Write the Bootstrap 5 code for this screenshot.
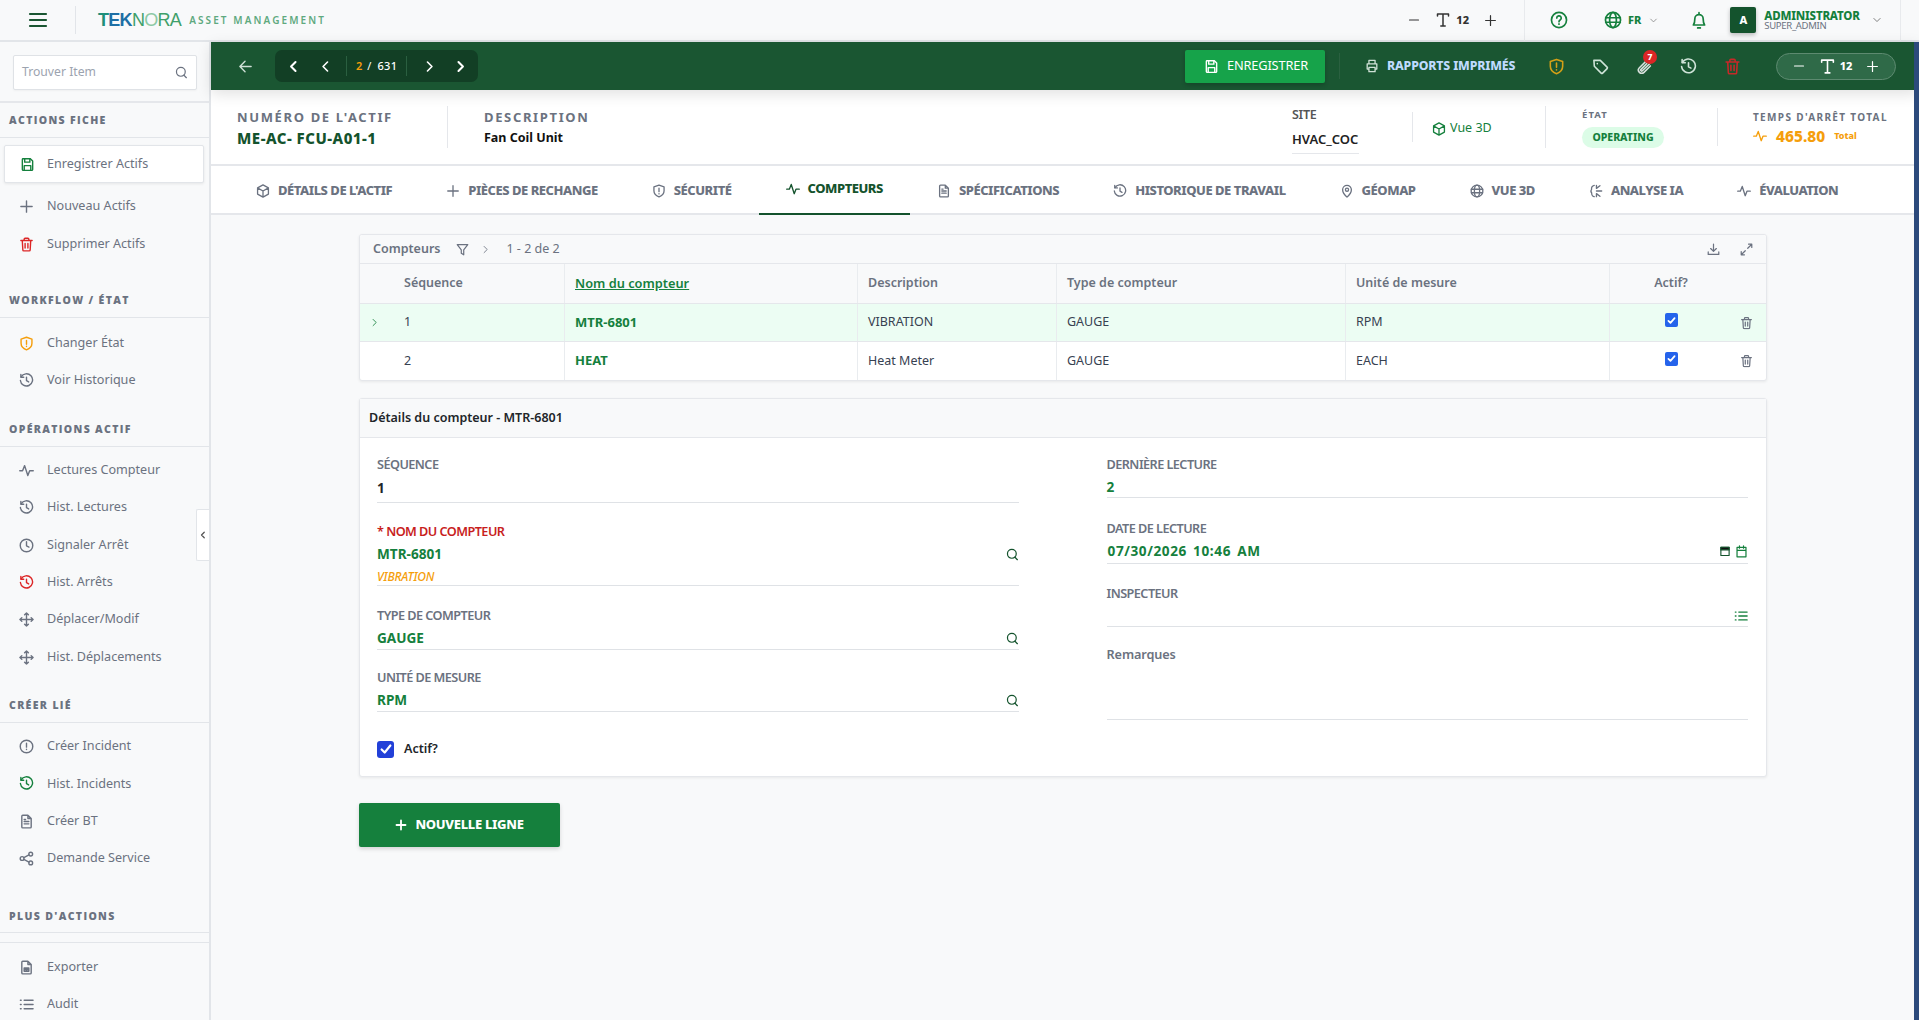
<!DOCTYPE html>
<html lang="fr">
<head>
<meta charset="utf-8">
<title>Compteurs</title>
<link href="https://cdn.jsdelivr.net/npm/bootstrap@5.3.0/dist/css/bootstrap.min.css" rel="stylesheet">
<style>
:root{--g:#15803d;--dg:#14532d;--bar:#1a5632;--txt:#6b7280;--line:#e5e7eb}
html,body{height:100%;overflow:hidden}
body{font-family:"Noto Sans","Open Sans",sans-serif;font-size:13px;background:#f8f9fa;color:#212529}
svg{fill:none;stroke:currentColor;stroke-width:1.5;stroke-linecap:round;stroke-linejoin:round;flex:none}
.sw2{stroke-width:2}.sw25{stroke-width:2.5}
.topbar{height:42px;background:#f8f9fa;border-bottom:2px solid #e2e5e9}
.burger{width:75px;color:var(--bar)}
.burger svg{stroke-width:2.2}
.tb-sep{width:1px;height:28px;background:#e2e5e9}
.logo{margin-left:22px;font-family:"Liberation Sans",sans-serif;font-size:18px;letter-spacing:-.7px;color:#3fa06a;line-height:1}
.logo b{color:#1d6fa5;font-weight:700}
.logo b i{font-style:normal;color:#1f8f7a}
.logo span{color:#8cc9a5}
.logo-sub{margin-left:8px;font-size:10px;font-weight:600;letter-spacing:2.1px;color:#5fa97f}
.font-ctl{gap:15px;color:#333;margin-right:27px}
.font-num{font-size:11px;font-weight:800;margin-left:-10px}
.tb-right{height:41px;border-left:1px solid #e8eaed;border-right:1px solid #e8eaed;padding-left:25px;width:377px;margin-right:18px;color:var(--g)}
.ic-globe{margin-left:36px}
.fr-txt{font-size:11px;font-weight:800;margin-left:6px}
.chev-a{color:#888;margin-left:8px}
.ic-bell{margin-left:32px}
.avatar{width:26px;height:26px;border-radius:2px;background:var(--dg);color:#fff;font-weight:800;font-size:11px;box-shadow:0 2px 4px rgba(0,0,0,.25);margin-left:22px}
.u-name{font-size:11.5px;font-weight:800;color:var(--g);line-height:10px;letter-spacing:-.2px}
.u-role{font-size:9.5px;color:#6b7280;line-height:9px;letter-spacing:-.3px}
.chev-b{color:#777;margin-left:12px}
.shell{height:978px}
.side{width:211px;flex:none;background:#f8f9fa;border-right:2px solid #e2e5e9;position:relative;overflow:hidden}
.side-search{height:61px;border-bottom:2px solid #e5e7eb;padding:13px 13px 0}
.search-box{height:35px;width:184px;border:1px solid #dfe2e6;border-radius:2px;background:#fff;padding:0 8px;color:#9ca3af;font-size:12.2px;box-shadow:0 1px 2px rgba(0,0,0,.04)}
.search-box svg{color:#6b7280}
.side-h{font-family:"Open Sans","Noto Sans",sans-serif;font-size:10.5px;font-weight:800;letter-spacing:1.35px;color:#6b7280;padding:2px 0 0 9px;height:35px;border-bottom:1px solid #e2e5e9;display:flex;align-items:center}
.sh-w{margin-top:20px}.sh-o{margin-top:12px}.sh-c{margin-top:12px}.sh-p{margin-top:21px}
.side-i{display:flex;align-items:center;height:37.4px;padding-left:19px;gap:13px;color:#6b7280;font-size:12.6px;white-space:nowrap}
.side-i svg{width:15px;height:15px}
.si-first{margin-top:5px}.si-w{margin-top:7px}
.side-act{margin:7px 5px 5px 4px;padding-left:15px;gap:12px;height:38px;background:#fff;border:1px solid #e2e5e9;border-radius:2px;box-shadow:0 1px 3px rgba(0,0,0,.08);padding-right:0}
.side-rule{height:10px;border-bottom:1px solid #e2e5e9}
.c-g{color:#15803d}.c-r{color:#dc2626}.c-o{color:#f59e0b}
.collapse-h{position:absolute;right:0;top:467px;width:13px;height:52px;background:#fff;border:1px solid #e2e5e9;border-right:0;border-radius:2px 0 0 2px;color:#555;z-index:2}
.collapse-h svg{stroke-width:2.5}
.main{flex:1;min-width:0;position:relative}
.gbar{height:48px;background:var(--bar);padding:0 23px 0 27px;color:#fff;position:relative;box-shadow:0 4px 14px rgba(0,0,0,.12);z-index:2}
.g-back{color:#cfe0d6}
.pager{margin-left:22px;width:203px;height:32px;background:#123f25;border-radius:7px;padding-left:12px;font-size:11px}
.pg-sep{width:1px;height:20px;background:#2a5f40}
.ml14{margin-left:14px}.ml19{margin-left:19px}.ml8{margin-left:9px}.ml5{margin-left:5px}.ml6{margin-left:6px}.ml16{margin-left:16px}.ml18{margin-left:18px}.ml9{margin-left:9px}
.pg-cur{color:#f59e0b;font-weight:600}
.pg-tot{font-weight:500;letter-spacing:.4px}
.btn-save{background:#16a34a;color:#fff;border:0;border-radius:2px;width:140px;height:33px;font-size:12.8px;font-weight:400;box-shadow:0 2px 4px rgba(0,0,0,.2);padding:0 0 0 2px;letter-spacing:-.15px}
.btn-save:hover{background:#16a34a;color:#fff}
.gb-sep{width:1px;height:26px;background:#2a6040;margin:0 25px 0 14px}
.rapports{color:#bfdbfe;font-weight:800;font-size:12.3px;letter-spacing:-.15px;width:169px}
.rapports svg{color:#cfe0d6}
.gicon{width:44px}
.gi-sh{color:#d4a017}.gi-tag{color:#cfe3d8}.gi-cl{color:#d8e0dc}.gi-tr{color:#c62828}
.fpill{width:120px;height:27px;margin-left:22px;border:1px solid #5d8a70;border-radius:14px;background:#2f6a48;font-size:11px;font-weight:800;gap:14px}
.clip-badge{position:absolute;top:-8px;right:9px;width:14px;height:14px;border-radius:50%;background:#dc2626;font-size:8.5px;font-weight:800;color:#fff;line-height:14px;text-align:center}
.infobar{height:76px;background:#fff;border-bottom:2px solid #e5e7eb;padding:0 0 0 26px;position:relative;z-index:1}
.ib-num{width:210px;padding-top:3px}
.ib-desc{margin-left:36px;padding-top:3px}
.i-lab{font-size:13px;font-weight:700;letter-spacing:1.65px;color:#6b7280;line-height:16px}
.i-val{font-size:15px;font-weight:800;color:var(--dg);line-height:20px;letter-spacing:.5px;margin-top:3px}
.i-val2{font-size:12.5px;font-weight:700;color:#111;line-height:20px;margin-top:3px}
.i-sep{width:1px;background:#e5e7eb}
.h42{height:42px}.h30{height:30px}.h38{height:38px}
.ib-right{margin-right:30px}
.ib-site{width:120px;padding-top:7px}
.site-val{font-size:13px;font-weight:600;color:#222;line-height:20px;border-bottom:1px solid #e5e7eb;padding-bottom:4px;margin-top:7px;width:67px}
.site-lab{font-size:12.5px;font-weight:600;color:#555;letter-spacing:-.3px;line-height:14px}
.ib-3d{margin-left:19px;width:113px;font-size:12.5px;color:#15803d;padding-top:3px}
.ib-etat{margin-left:36px;width:135px;padding-top:2px}
.ib-temps{margin-left:35px;width:136px;padding-top:2px}
.state-pill{width:82px;height:21px;background:#dcfce7;border-radius:11px;color:#15803d;font-size:10.5px;font-weight:800;margin-top:5px}
.sm-lab{font-size:9.5px;font-weight:700;letter-spacing:1.1px;color:#6b7280}
.sm-lab2{font-size:10px;letter-spacing:1.35px;white-space:nowrap}
.t-val{font-size:15.5px;font-weight:800;margin-left:9px;line-height:22px}
.t-tot{font-size:9px;font-weight:800;margin-left:9px}
.tabs{height:49px;background:#fff;border-bottom:2px solid #e5e7eb;padding-left:18px;position:relative}
.tabi{height:47px;padding:2px 27px 0;display:flex;align-items:center;gap:8px;color:#6b7280;font-size:13px;font-weight:800;letter-spacing:-.47px;white-space:nowrap}
.tabi svg{width:14px;height:14px}
.tabi.on{color:var(--dg);border-bottom:2px solid var(--dg);height:49px;margin-bottom:-2px;padding-bottom:2px;padding-top:0}
.content{padding:19px 152px 0 148px}
.mcard{background:#fff;border:1px solid #e5e7eb;border-radius:3px;box-shadow:0 1px 3px rgba(0,0,0,.07)}
.t-bar{height:29px;background:#f8f9fa;padding:0 13px;color:#6b7280;font-size:12.5px;border-bottom:1px solid #e5e7eb;gap:12px}
.t-title{font-weight:600}
.t-count{margin-left:4px}
.ic-dl{margin-left:auto;margin-right:2px}
.ic-ex{margin-left:6px}
.grid-h,.grid-r{display:grid;grid-template-columns:205px 293px 199px 289px 264px 156px;align-items:stretch}
.grid-h{height:40px;background:#f8f9fa;border-bottom:1px solid #e5e7eb;font-size:12.5px;font-weight:600;color:#6b7280}
.grid-r{height:38px;font-size:12.5px;color:#374151;border-bottom:1px solid #e5e7eb}
.grid-r:last-child{border-bottom:0}
.grid-r.sel{background:#ecfdf3}
.cellx{display:flex;align-items:center;padding-left:10px;border-right:1px solid #e9ecef;white-space:nowrap}
.cellx:last-child{border-right:0}
.cell-seq{padding-left:44px;position:relative}
.row-arr{position:absolute;left:10px;color:#15803d}
.cell-name{font-weight:700;color:var(--g);font-size:13px}
.name-h{color:var(--g);text-decoration:underline;font-size:12.8px}
.cell-act{position:relative;justify-content:center;padding:0 34px 0 0}
.trash-abs{position:absolute;right:13px;color:#6b7280}
.chk{width:13px;height:14px;border-radius:2px;background:#2563eb;color:#fff;margin-top:-5px}
.chk svg{stroke-width:2.5}
.det-h{height:39px;background:#f8f9fa;border-bottom:1px solid #e5e7eb;padding-left:9px;font-size:12.5px;font-weight:600;color:#212529}
.det-card{margin-top:17px}
.det-b{padding:16px 18px 0 17px;height:338px;gap:88px}
.colf{flex:1 1 0;min-width:0}
.f-lab{font-size:12.7px;font-weight:600;color:#6b7280;letter-spacing:-.55px;line-height:20px}
.f-lab.req{color:#c81e1e}
.f-lab.rem{letter-spacing:-.1px}
.f-val{font-size:13.6px;font-weight:700;color:var(--g);line-height:20px;margin-top:3px}
.f-val.dark{color:#212529;margin-top:4px}
.f-val.date{letter-spacing:.6px;word-spacing:2px;padding-left:1px}
.f-line{border-bottom:1px solid #dfe2e6}
.f-val svg{color:var(--dg);width:13px;height:13px}
.f-vib{font-size:12px;font-weight:500;font-style:italic;color:#f59e0b;line-height:14px;margin-top:6px;letter-spacing:-.2px}
.fb-seq{height:49px}
.fb-nom{height:65px;margin-top:18px}
.fb-type{height:45px;margin-top:19px}
.fb-unit{height:45px;margin-top:17px}
.fb-der{height:44px}
.fb-date{height:46px;margin-top:20px}
.fb-insp{height:44px;margin-top:19px}
.fb-rem{height:76px;margin-top:17px}
.insp-ic{margin-top:6px;color:#15803d}
.cal-n{color:#111;width:12px!important;height:12px!important}
.cal-n .top{fill:#111}
.cal-g{color:#15803d!important}
.chk-row{margin-top:28px;gap:10px}
.chk-txt{font-size:12.5px;font-weight:600;color:#212529}
.btn-new{background:var(--g);color:#fff;border:0;border-radius:2px;width:201px;height:44px;margin-top:26px;font-size:13px;font-weight:800;letter-spacing:-.3px;gap:8px;box-shadow:0 2px 4px rgba(0,0,0,.15);padding:0}
.btn-new:hover{background:var(--g);color:#fff}
.btn-new svg{stroke-width:2.4}
.bigchk{width:17px;height:17px;border-radius:3px;background:#2240d8;color:#fff}
.bigchk svg{stroke-width:2.5}
.edge{position:absolute;right:0;top:42px;bottom:0;width:5px;background:#2c4a7c;z-index:3}
</style>
</head>
<body>
<svg width="0" height="0" class="position-absolute">
<defs>
<symbol id="i-search" viewBox="0 0 16 16"><circle cx="7.2" cy="7.2" r="5.4"/><path d="M11 11.4l3 3"/></symbol>
<symbol id="i-save" viewBox="0 0 16 16"><path d="M3 1.8h8l2.5 2.5v9a1 1 0 0 1-1 1h-9a1 1 0 0 1-1-1v-10.500a1 1 0 0 1 .5-1z"/><path d="M5 1.800v3.700h5.500v-3.700M4.500 14.200v-5h7v5"/></symbol>
<symbol id="i-plus" viewBox="0 0 16 16"><path d="M8 2v12M2 8h12"/></symbol>
<symbol id="i-trash" viewBox="0 0 16 16"><path d="M2 3.800h12M5.500 3.800v-1.500a1 1 0 0 1 1-1h3a1 1 0 0 1 1 1v1.500M3.500 3.800l.6 10a1 1 0 0 0 1 1h5.800a1 1 0 0 0 1-1l.6-10M6.500 6.800v5M9.500 6.800v5"/></symbol>
<symbol id="i-shield" viewBox="0 0 16 16"><path d="M8 1.300l5.800 2v4.500c0 3.500-2.500 5.800-5.800 7-3.300-1.200-5.800-3.500-5.800-7v-4.500z"/><path d="M8 4.800v4M8 11v.3"/></symbol>
<symbol id="i-hist" viewBox="0 0 16 16"><path d="M2.300 4.200a6.500 6.500 0 1 1-.8 3.800"/><path d="M2 1.500v3h3M8 4.500v3.700l2.300 1.300"/></symbol>
<symbol id="i-pulse" viewBox="0 0 16 16"><path d="M.8 8.200h3l2.200-5.400 3.400 10.600 2-5.200h3.800"/></symbol>
<symbol id="i-clock" viewBox="0 0 16 16"><circle cx="8" cy="8" r="6.700"/><path d="M8 4v4.300l2.600 1.400"/></symbol>
<symbol id="i-move" viewBox="0 0 16 16"><path d="M8 1v14M1 8h14M6 3l2-2 2 2M6 13l2 2 2-2M3 6l-2 2 2 2M13 6l2 2-2 2"/></symbol>
<symbol id="i-alert" viewBox="0 0 16 16"><circle cx="8" cy="8" r="6.700"/><path d="M8 4.500v4.200M8 11v.3"/></symbol>
<symbol id="i-doc" viewBox="0 0 16 16"><path d="M3 2.300a1 1 0 0 1 1-1h5.500l3.500 3.500v9a1 1 0 0 1-1 1h-8a1 1 0 0 1-1-1zM9.500 1.300v3.500h3.500M5.500 8h5M5.500 10.500h5M5.500 5.800h1.500"/></symbol>
<symbol id="i-share" viewBox="0 0 16 16"><circle cx="3.300" cy="8" r="2"/><circle cx="12.500" cy="3.300" r="2"/><circle cx="12.500" cy="12.700" r="2"/><path d="M5.200 7l5.400-2.800M5.200 9l5.400 2.800"/></symbol>
<symbol id="i-xls" viewBox="0 0 16 16"><path d="M3 2.300a1 1 0 0 1 1-1h5.500l3.500 3.500v9a1 1 0 0 1-1 1h-8a1 1 0 0 1-1-1zM9.500 1.300v3.500h3.500M5.500 8.500h5v3.500h-5zM8 8.500v3.500M5.500 10.200h5"/></symbol>
<symbol id="i-list" viewBox="0 0 16 16"><path d="M5.500 3.500h9.500M5.500 8h9.500M5.500 12.500h9.500M1.500 3.500h.8M1.500 8h.8M1.500 12.500h.8"/></symbol>
<symbol id="i-cube" viewBox="0 0 16 16"><path d="M8 1l6.200 3.500v7L8 15l-6.200-3.500v-7zM1.800 4.500L8 8l6.200-3.500M8 8v7"/></symbol>
<symbol id="i-globe" viewBox="0 0 16 16"><circle cx="8" cy="8" r="6.700"/><ellipse cx="8" cy="8" rx="3" ry="6.700"/><path d="M1.500 6h13M1.500 10h13"/></symbol>
<symbol id="i-pin" viewBox="0 0 16 16"><path d="M8 15s5-4.500 5-8.500a5 5 0 0 0-10 0c0 4 5 8.500 5 8.500z"/><circle cx="8" cy="6.500" r="1.800"/></symbol>
<symbol id="i-brain" viewBox="0 0 16 16"><path d="M6 1.500C3.500 2 2.500 4 3 6c-1 1.500-1 3 0 4 0 2.500 1.500 4.500 3 4.500M8.500 1.500v3.500M8.500 5l4-3M8.500 8h6M8.500 11l4 3M8.500 11v3.500"/></symbol>
<symbol id="i-tt" viewBox="0 0 16 16"><path d="M2.500 4V2h11v2M8 2v12M5.800 14h4.400"/></symbol>
<symbol id="i-left" viewBox="0 0 16 16"><path d="M10.500 2.500L5 8l5.500 5.500"/></symbol>
<symbol id="i-right" viewBox="0 0 16 16"><path d="M5.500 2.500L11 8l-5.500 5.500"/></symbol>
<symbol id="i-down" viewBox="0 0 16 16"><path d="M3 5.500l5 5 5-5"/></symbol>
</defs>
</svg>

<header class="topbar d-flex align-items-center">
  <div class="burger d-flex justify-content-center"><svg width="20" height="18" viewBox="0 0 20 18"><path d="M2 3h16M2 9h16M2 15h16"/></svg></div>
  <div class="tb-sep"></div>
  <div class="d-flex align-items-center flex-grow-1"><span class="logo"><b><i>T</i>EK</b>N<span>O</span>RA</span><span class="logo-sub">ASSET MANAGEMENT</span></div>
  <div class="font-ctl d-flex align-items-center"><svg width="12" height="12" viewBox="0 0 16 16"><path d="M2 8h12"/></svg><svg width="16" height="16" viewBox="0 0 16 16"><use href="#i-tt"/></svg><span class="font-num">12</span><svg width="13" height="13" viewBox="0 0 16 16"><path d="M8 2v12M2 8h12"/></svg></div>
  <div class="tb-right d-flex align-items-center">
    <svg width="18" height="18" viewBox="0 0 16 16"><circle cx="8" cy="8" r="6.700"/><path d="M6 6.300a2 2 0 1 1 3 1.700c-.7.400-1 .8-1 1.500M8 11.500v.2"/></svg>
    <svg width="18" height="18" class="ic-globe" viewBox="0 0 16 16"><use href="#i-globe"/></svg>
    <b class="fr-txt">FR</b><svg width="9" height="9" class="chev-a" viewBox="0 0 16 16"><use href="#i-down"/></svg>
    <svg width="18" height="19" class="ic-bell" viewBox="0 0 16 16"><path d="M3 12c1-1.500 1.300-2.500 1.300-5.500a3.700 3.700 0 0 1 7.400 0c0 3 .3 4 1.300 5.500zM8 1v1M6.800 14.600h2.400"/></svg>
    <div class="avatar d-flex align-items-center justify-content-center">A</div>
    <div class="ms-2"><div class="u-name">ADMINISTRATOR</div><div class="u-role">SUPER_ADMIN</div></div>
    <svg width="10" height="10" class="chev-b" viewBox="0 0 16 16"><use href="#i-down"/></svg>
  </div>
</header>

<div class="shell d-flex">
  <aside class="side">
    <div class="side-search"><div class="search-box d-flex align-items-center justify-content-between"><span>Trouver Item</span><svg width="13" height="13" viewBox="0 0 16 16"><use href="#i-search"/></svg></div></div>
    <div class="side-h">ACTIONS FICHE</div>
    <div class="side-i side-act"><svg class="c-g" viewBox="0 0 16 16"><use href="#i-save"/></svg>Enregistrer Actifs</div>
    <div class="side-i"><svg viewBox="0 0 16 16"><use href="#i-plus"/></svg>Nouveau Actifs</div>
    <div class="side-i"><svg class="c-r" viewBox="0 0 16 16"><use href="#i-trash"/></svg>Supprimer Actifs</div>
    <div class="side-h sh-w">WORKFLOW / ÉTAT</div>
    <div class="side-i si-w"><svg class="c-o" viewBox="0 0 16 16"><use href="#i-shield"/></svg>Changer État</div>
    <div class="side-i"><svg viewBox="0 0 16 16"><use href="#i-hist"/></svg>Voir Historique</div>
    <div class="side-h sh-o">OPÉRATIONS ACTIF</div>
    <div class="side-i si-first"><svg viewBox="0 0 16 16"><use href="#i-pulse"/></svg>Lectures Compteur</div>
    <div class="side-i"><svg viewBox="0 0 16 16"><use href="#i-hist"/></svg>Hist. Lectures</div>
    <div class="side-i"><svg viewBox="0 0 16 16"><use href="#i-clock"/></svg>Signaler Arrêt</div>
    <div class="side-i"><svg class="c-r" viewBox="0 0 16 16"><use href="#i-hist"/></svg>Hist. Arrêts</div>
    <div class="side-i"><svg viewBox="0 0 16 16"><use href="#i-move"/></svg>Déplacer/Modif</div>
    <div class="side-i"><svg viewBox="0 0 16 16"><use href="#i-move"/></svg>Hist. Déplacements</div>
    <div class="side-h sh-c">CRÉER LIÉ</div>
    <div class="side-i si-first"><svg viewBox="0 0 16 16"><use href="#i-alert"/></svg>Créer Incident</div>
    <div class="side-i"><svg class="c-g" viewBox="0 0 16 16"><use href="#i-hist"/></svg>Hist. Incidents</div>
    <div class="side-i"><svg viewBox="0 0 16 16"><use href="#i-doc"/></svg>Créer BT</div>
    <div class="side-i"><svg viewBox="0 0 16 16"><use href="#i-share"/></svg>Demande Service</div>
    <div class="side-h sh-p">PLUS D'ACTIONS</div>
    <div class="side-rule"></div>
    <div class="side-i si-first"><svg viewBox="0 0 16 16"><use href="#i-xls"/></svg>Exporter</div>
    <div class="side-i"><svg viewBox="0 0 16 16"><use href="#i-list"/></svg>Audit</div>
    <div class="collapse-h d-flex align-items-center justify-content-center"><svg width="8" height="8" viewBox="0 0 16 16"><use href="#i-left"/></svg></div>
  </aside>

  <main class="main">
    <div class="gbar d-flex align-items-center">
      <svg width="15" height="15" class="g-back" viewBox="0 0 16 16"><path d="M14 8H2M7.500 2.500L2 8l5.500 5.500"/></svg>
      <div class="pager d-flex align-items-center">
        <svg width="13" height="13" class="sw25" viewBox="0 0 16 16"><use href="#i-left"/></svg>
        <svg width="13" height="13" class="sw2 ml19" viewBox="0 0 16 16"><use href="#i-left"/></svg>
        <span class="pg-sep ml14"></span>
        <span class="pg-cur ml8">2</span><span class="ml5">/</span><span class="pg-tot ml6">631</span>
        <span class="pg-sep ml9"></span>
        <svg width="13" height="13" class="sw2 ml16" viewBox="0 0 16 16"><use href="#i-right"/></svg>
        <svg width="13" height="13" class="sw25 ml18" viewBox="0 0 16 16"><use href="#i-right"/></svg>
      </div>
      <div class="ms-auto d-flex align-items-center">
        <button class="btn btn-save d-flex align-items-center justify-content-center gap-2" type="button"><svg width="15" height="15" viewBox="0 0 16 16"><use href="#i-save"/></svg>ENREGISTRER</button>
        <span class="gb-sep"></span>
        <div class="rapports d-flex align-items-center gap-1"><svg width="14" height="14" viewBox="0 0 16 16"><path d="M4.500 5.500V1.500h7v4M4.500 11.500H2.500v-6h11v6h-2M4.500 9.500h7v5h-7z"/></svg><span class="ms-1">RAPPORTS IMPRIMÉS</span></div>
        <div class="gicon d-flex justify-content-center"><svg width="17" height="17" class="gi-sh" viewBox="0 0 16 16"><use href="#i-shield"/></svg></div>
        <div class="gicon d-flex justify-content-center"><svg width="17" height="17" class="gi-tag" viewBox="0 0 16 16"><path d="M1.800 2.200h6l6.400 6.400a1 1 0 0 1 0 1.400l-4.200 4.200a1 1 0 0 1-1.400 0L2.200 7.800zM5 5.200v.1"/></svg></div>
        <div class="gicon d-flex justify-content-center position-relative"><svg width="17" height="17" class="gi-cl" viewBox="0 0 16 16"><path d="M13.500 7.500l-6 6a3 3 0 0 1-4.300-4.300l6.500-6.500a2 2 0 0 1 2.900 2.900L6 12a.9.900 0 0 1-1.300-1.300l5.500-5.500"/></svg><span class="clip-badge">7</span></div>
        <div class="gicon d-flex justify-content-center"><svg width="17" height="17" class="gi-tag" viewBox="0 0 16 16"><use href="#i-hist"/></svg></div>
        <div class="gicon d-flex justify-content-center"><svg width="17" height="17" class="gi-tr" viewBox="0 0 16 16"><use href="#i-trash"/></svg></div>
        <div class="fpill d-flex align-items-center justify-content-center"><svg width="12" height="12" viewBox="0 0 16 16"><path d="M2 8h12"/></svg><span class="d-flex align-items-center"><svg width="17" height="17" viewBox="0 0 16 16"><use href="#i-tt"/></svg><span class="ms-1">12</span></span><svg width="13" height="13" viewBox="0 0 16 16"><use href="#i-plus"/></svg></div>
      </div>
    </div>

    <div class="infobar d-flex align-items-center">
      <div class="ib-num"><div class="i-lab">NUMÉRO DE L'ACTIF</div><div class="i-val">ME-AC- FCU-A01-1</div></div>
      <div class="i-sep h42"></div>
      <div class="ib-desc"><div class="i-lab">DESCRIPTION</div><div class="i-val2">Fan Coil Unit</div></div>
      <div class="ms-auto ib-right d-flex align-items-center">
        <div class="ib-site"><div class="site-lab">SITE</div><div class="site-val">HVAC_COC</div></div>
        <div class="i-sep h30"></div>
        <div class="ib-3d d-flex align-items-center gap-1"><svg width="14" height="14" viewBox="0 0 16 16"><use href="#i-cube"/></svg>Vue 3D</div>
        <div class="i-sep h42"></div>
        <div class="ib-etat"><div class="sm-lab">ÉTAT</div><div class="state-pill d-flex align-items-center justify-content-center">OPERATING</div></div>
        <div class="i-sep h38"></div>
        <div class="ib-temps">
          <div class="sm-lab sm-lab2">TEMPS D'ARRÊT TOTAL</div>
          <div class="d-flex align-items-center c-o"><svg width="14" height="14" viewBox="0 0 16 16"><use href="#i-pulse"/></svg><b class="t-val">465.80</b><b class="t-tot">Total</b></div>
        </div>
      </div>
    </div>

    <nav class="tabs d-flex align-items-stretch">
      <div class="tabi"><svg viewBox="0 0 16 16"><use href="#i-cube"/></svg>DÉTAILS DE L'ACTIF</div>
      <div class="tabi"><svg viewBox="0 0 16 16"><use href="#i-plus"/></svg>PIÈCES DE RECHANGE</div>
      <div class="tabi"><svg viewBox="0 0 16 16"><use href="#i-shield"/></svg>SÉCURITÉ</div>
      <div class="tabi on"><svg viewBox="0 0 16 16"><use href="#i-pulse"/></svg>COMPTEURS</div>
      <div class="tabi"><svg viewBox="0 0 16 16"><use href="#i-doc"/></svg>SPÉCIFICATIONS</div>
      <div class="tabi"><svg viewBox="0 0 16 16"><use href="#i-hist"/></svg>HISTORIQUE DE TRAVAIL</div>
      <div class="tabi"><svg viewBox="0 0 16 16"><use href="#i-pin"/></svg>GÉOMAP</div>
      <div class="tabi"><svg viewBox="0 0 16 16"><use href="#i-globe"/></svg>VUE 3D</div>
      <div class="tabi"><svg viewBox="0 0 16 16"><use href="#i-brain"/></svg>ANALYSE IA</div>
      <div class="tabi"><svg viewBox="0 0 16 16"><use href="#i-pulse"/></svg>ÉVALUATION</div>
    </nav>

    <div class="content">
      <section class="mcard overflow-hidden">
        <div class="t-bar d-flex align-items-center">
          <span class="t-title">Compteurs</span>
          <svg width="13" height="13" class="ms-1" viewBox="0 0 16 16"><path d="M1.500 2h13l-5 6.500v6l-3-2v-4z"/></svg>
          <svg width="9" height="9" viewBox="0 0 16 16"><use href="#i-right"/></svg>
          <span class="t-count">1 - 2 de 2</span>
          <svg width="13" height="13" class="ic-dl" viewBox="0 0 16 16"><path d="M8 1.500v8.500M4.500 6.800L8 10.300l3.500-3.500M1.500 11v3h13v-3"/></svg>
          <svg width="13" height="13" class="ic-ex" viewBox="0 0 16 16"><path d="M9.500 6.500L14.500 1.500M10.500 1.500h4v4M6.500 9.500L1.500 14.500M5.500 14.500h-4v-4"/></svg>
        </div>
        <div class="grid-h">
          <div class="cellx cell-seq">Séquence</div><div class="cellx"><span class="name-h">Nom du compteur</span></div><div class="cellx">Description</div><div class="cellx">Type de compteur</div><div class="cellx">Unité de mesure</div><div class="cellx cell-act">Actif?</div>
        </div>
        <div class="grid-r sel">
          <div class="cellx cell-seq"><svg width="9" height="9" class="row-arr" viewBox="0 0 16 16"><use href="#i-right"/></svg>1</div><div class="cellx cell-name">MTR-6801</div><div class="cellx">VIBRATION</div><div class="cellx">GAUGE</div><div class="cellx">RPM</div>
          <div class="cellx cell-act"><span class="chk d-flex align-items-center justify-content-center"><svg width="11" height="11" viewBox="0 0 16 16"><path d="M3.500 8.500l3 3 6-7"/></svg></span><svg width="13" height="14" class="trash-abs" viewBox="0 0 16 16"><use href="#i-trash"/></svg></div>
        </div>
        <div class="grid-r">
          <div class="cellx cell-seq">2</div><div class="cellx cell-name">HEAT</div><div class="cellx">Heat Meter</div><div class="cellx">GAUGE</div><div class="cellx">EACH</div>
          <div class="cellx cell-act"><span class="chk d-flex align-items-center justify-content-center"><svg width="11" height="11" viewBox="0 0 16 16"><path d="M3.500 8.500l3 3 6-7"/></svg></span><svg width="13" height="14" class="trash-abs" viewBox="0 0 16 16"><use href="#i-trash"/></svg></div>
        </div>
      </section>

      <section class="mcard det-card">
        <div class="det-h d-flex align-items-center">Détails du compteur - MTR-6801</div>
        <div class="det-b d-flex">
          <div class="colf">
            <div class="f-line fb-seq"><div class="f-lab">SÉQUENCE</div><div class="f-val dark">1</div></div>
            <div class="f-line fb-nom"><div class="f-lab req">* NOM DU COMPTEUR</div><div class="f-val d-flex justify-content-between align-items-center">MTR-6801<svg viewBox="0 0 16 16"><use href="#i-search"/></svg></div><div class="f-vib">VIBRATION</div></div>
            <div class="f-line fb-type"><div class="f-lab">TYPE DE COMPTEUR</div><div class="f-val d-flex justify-content-between align-items-center">GAUGE<svg viewBox="0 0 16 16"><use href="#i-search"/></svg></div></div>
            <div class="f-line fb-unit"><div class="f-lab">UNITÉ DE MESURE</div><div class="f-val d-flex justify-content-between align-items-center">RPM<svg viewBox="0 0 16 16"><use href="#i-search"/></svg></div></div>
            <div class="chk-row d-flex align-items-center"><span class="bigchk d-flex align-items-center justify-content-center"><svg width="14" height="14" viewBox="0 0 16 16"><path d="M3 8.500l3.500 3.500 6.500-8"/></svg></span><span class="chk-txt">Actif?</span></div>
          </div>
          <div class="colf">
            <div class="f-line fb-der"><div class="f-lab">DERNIÈRE LECTURE</div><div class="f-val">2</div></div>
            <div class="f-line fb-date"><div class="f-lab">DATE DE LECTURE</div><div class="f-val date d-flex justify-content-between align-items-center">07/30/2026 10:46 AM<span class="d-flex align-items-center gap-1"><svg class="cal-n" viewBox="0 0 16 16"><path d="M2.500 3h11v11h-11z"/><path class="top" d="M2.500 3h11v3.500h-11z"/></svg><svg class="cal-g" viewBox="0 0 16 16"><path d="M2.500 3h11v11.500h-11zM2.500 6.500h11M5.500 1v3M10.500 1v3"/></svg></span></div></div>
            <div class="f-line fb-insp"><div class="f-lab">INSPECTEUR</div><div class="insp-ic d-flex justify-content-end"><svg width="14" height="14" viewBox="0 0 16 16"><use href="#i-list"/></svg></div></div>
            <div class="f-line fb-rem"><div class="f-lab rem">Remarques</div></div>
          </div>
        </div>
      </section>

      <button class="btn btn-new d-flex align-items-center justify-content-center" type="button"><svg width="12" height="12" viewBox="0 0 16 16"><use href="#i-plus"/></svg>NOUVELLE LIGNE</button>
    </div>
  </main>
</div>
<div class="edge"></div>
</body>
</html>
